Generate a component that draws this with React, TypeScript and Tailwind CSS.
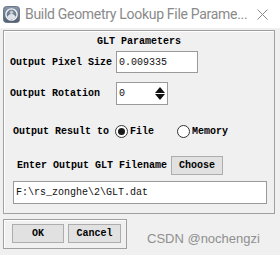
const mono = { fontFamily: '"Liberation Mono", "DejaVu Sans Mono", monospace' };

const AppIcon = () => (
  <svg width="17" height="17" viewBox="0 0 17 17">
    <defs>
      <linearGradient id="ig" x1="0" y1="0" x2="0" y2="1">
        <stop offset="0" stopColor="#8c9aab" />
        <stop offset="1" stopColor="#4f5d6e" />
      </linearGradient>
    </defs>
    <rect x="0.5" y="0.5" width="16" height="16" rx="3" fill="url(#ig)" stroke="#6b7786" />
    <circle cx="8.5" cy="8.5" r="5.6" fill="none" stroke="#f2f4f6" strokeWidth="1.4" />
    <path d="M4.2 10.5 Q8.5 5 12.8 10.5 L12.3 12 Q8.5 14.6 4.7 12 Z" fill="#dfe4ea" />
    <circle cx="8.5" cy="6.3" r="1.6" fill="#c9d0d8" />
  </svg>
);

const Radio = ({ checked }: { checked?: boolean }) => (
  <span className="w-[13px] h-[13px] rounded-full border border-[#333] bg-white flex items-center justify-center shrink-0">
    {checked && <span className="w-[7px] h-[7px] rounded-full bg-[#1a1a1a]" />}
  </span>
);

export default function App() {
  return (
    <div className="w-[280px] h-[255px] bg-[#f0f0f0] flex flex-col overflow-hidden">
      {/* title bar */}
      <div className="h-[28px] bg-white flex items-center pl-[3px] pr-[12px] shrink-0">
        <AppIcon />
        <span
          className="ml-[5px] text-[14px] tracking-[-0.3px] text-[#8a8a8a] whitespace-nowrap flex-1"
          style={{ fontFamily: 'Roboto, "Liberation Sans", sans-serif' }}
        >
          Build Geometry Lookup File Parame...
        </span>
        <svg width="11" height="11" viewBox="0 0 11 11">
          <path d="M0.5 0.5 L10.5 10.5 M10.5 0.5 L0.5 10.5" stroke="#8a8a8a" strokeWidth="1" />
        </svg>
      </div>

      <div className="flex flex-col pl-[3px] pt-[2px]" style={mono}>
        {/* GLT Parameters group */}
        <div className="w-[272px] h-[184px] border border-[#a0a0a0] shadow-[inset_1px_1px_0_#fff] flex flex-col">
          <div className="mt-[2px] h-[16px] flex items-center justify-center text-[10px] font-bold text-black">
            GLT Parameters
          </div>

          <div className="mt-[2px] flex items-center pl-[6px] h-[22px]">
            <span className="w-[106px] text-[10px] font-bold whitespace-nowrap">Output Pixel Size</span>
            <div className="w-[82px] h-[22px] bg-white border border-[#9a9a9a] flex items-center pl-[2px] text-[10px] text-[#111]">
              0.009335
            </div>
          </div>

          <div className="mt-[9px] flex items-center pl-[6px] h-[23px]">
            <span className="w-[106px] text-[10px] font-bold whitespace-nowrap">Output Rotation</span>
            <div className="w-[52px] h-[23px] bg-white border border-[#9a9a9a] flex items-center pl-[2px] text-[10px] text-[#111]">
              <span className="flex-1">0</span>
              <div className="w-[12px] h-full flex flex-col items-center justify-center gap-[1px] mr-[1px]">
                <svg width="10" height="6" viewBox="0 0 10 6">
                  <path d="M0 6 L5 0 L10 6 Z" fill="#111" />
                </svg>
                <svg width="10" height="6" viewBox="0 0 10 6">
                  <path d="M0 0 L10 0 L5 6 Z" fill="#111" />
                </svg>
              </div>
            </div>
          </div>

          <div className="mt-[19px] flex items-center pl-[9px] h-[14px] text-[10px] font-bold">
            <span className="w-[102px] whitespace-nowrap">Output Result to</span>
            <Radio checked />
            <span className="ml-[2px] w-[47px]">File</span>
            <Radio />
            <span className="ml-[2px]">Memory</span>
          </div>

          <div className="mt-[18px] flex items-center pl-[13px] h-[19px] text-[10px] font-bold">
            <span className="w-[154px] whitespace-nowrap">Enter Output GLT Filename</span>
            <button className="w-[52px] h-[19px] bg-[#e1e1e1] border border-[#adadad] flex items-center justify-center font-bold">
              Choose
            </button>
          </div>

          <div className="mt-[6px] ml-[9px] w-[254px] h-[23px] bg-white border border-[#9a9a9a] flex items-center pl-[2px] text-[10px] text-[#111]">
            F:\rs_zonghe\2\GLT.dat
          </div>
        </div>

        {/* bottom row */}
        <div className="mt-[5px] flex items-start">
          <div className="w-[124px] h-[30px] border border-[#a0a0a0] shadow-[inset_1px_1px_0_#fff] flex items-start pt-[4px] pl-[8px] gap-[4px]">
            <button className="w-[52px] h-[19px] bg-[#e1e1e1] border border-[#adadad] text-[10px] font-bold flex items-center justify-center">
              OK
            </button>
            <button className="w-[53px] h-[19px] bg-[#e1e1e1] border border-[#adadad] text-[10px] font-bold flex items-center justify-center">
              Cancel
            </button>
          </div>
          <span
            className="ml-[20px] mt-[10px] text-[13px] text-[#8f8f8f] whitespace-nowrap"
            style={{ fontFamily: '"Liberation Sans", Arial, sans-serif' }}
          >
            CSDN @nochengzi
          </span>
        </div>
      </div>
    </div>
  );
}
